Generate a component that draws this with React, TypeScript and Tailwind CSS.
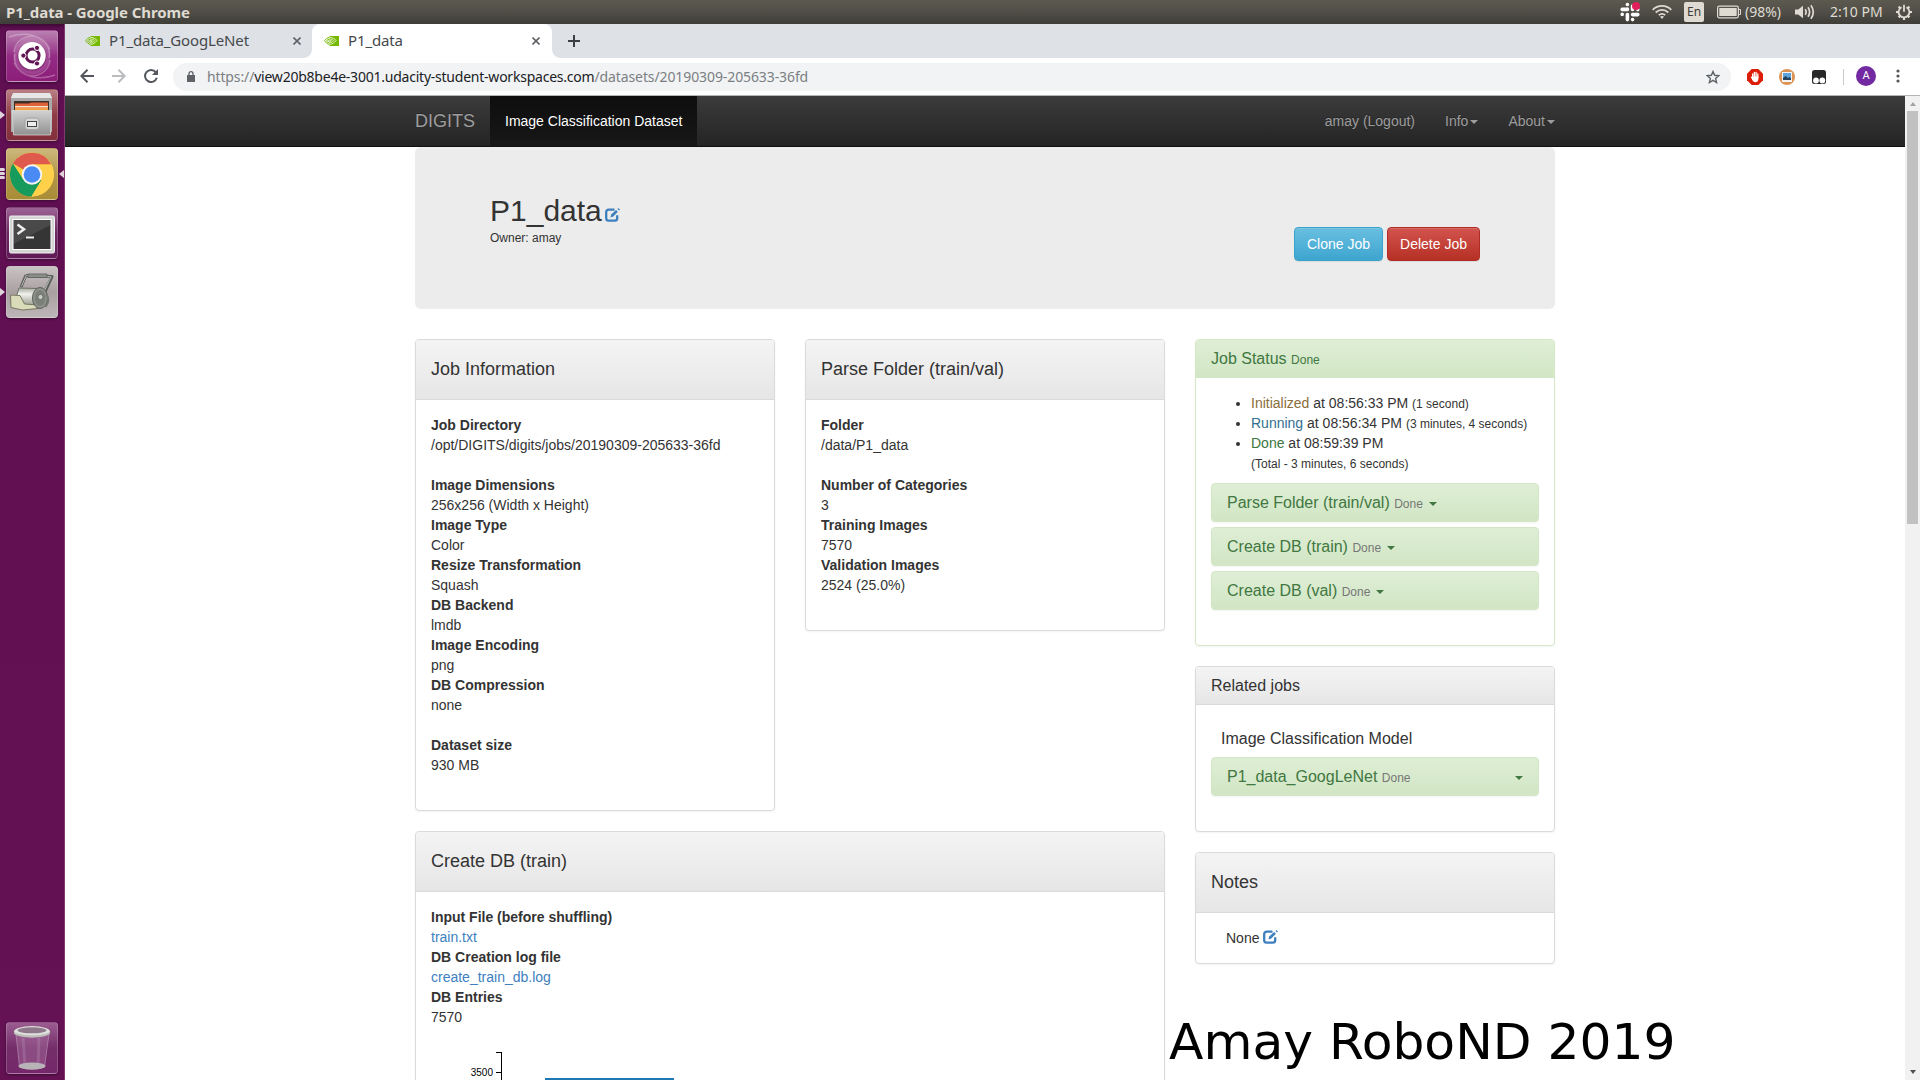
import React from 'react';

const UI = "font-['Noto_Sans',sans-serif]";

/* ---------- small shared pieces ---------- */

function Caret({ className = '' }: { className?: string }) {
  return (
    <span
      className={`inline-block h-0 w-0 border-x-4 border-t-4 border-x-transparent border-t-current align-middle ${className}`}
    />
  );
}

function EditIcon({ className = '' }: { className?: string }) {
  return (
    <svg viewBox="0 0 15 14" className={`inline-block h-[14px] w-[15px] ${className}`} fill="none">
      <path
        d="M9.500 1.700H3.600A2.400 2.400 0 0 0 1.200 4.100v6.200a2.400 2.400 0 0 0 2.400 2.400h6.200a2.400 2.400 0 0 0 2.400-2.400V7.200"
        stroke="#3d80bf"
        strokeWidth="2.300"
      />
      <path d="M5.400 9.600 6.200 6.600 11 1.900 12.900 3.800 8.300 8.500z" fill="#3d80bf" />
      <path d="M12.400.9 13.300 0 15 1.700 14.100 2.600z" fill="#3d80bf" />
    </svg>
  );
}

function NvidiaIcon() {
  return (
    <svg viewBox="0 0 15 10" className="h-[10px] w-[15px] shrink-0" fill="none">
      <path d="M5.500 0H15v10H5.500z" fill="#76b900" />
      <g stroke="#76b900" strokeWidth="1">
        <path d="M5.500 1.400C3.500 1.600 1.700 2.900.6 4.500 1.600 6.500 3.400 8.100 5.500 8.400" />
        <path d="M5.500 3.100C4.400 3.300 3.300 3.900 2.600 4.700 3.200 5.800 4.300 6.600 5.500 6.800" />
        <path d="M5.500 4.300 4.700 4.800l.8.7" />
      </g>
      <g stroke="#edf7da" strokeWidth=".9">
        <path d="M5.500 1.500c2.700-.3 4.900.900 6.500 3C10.500 6.600 8.300 8.300 5.500 8.300" />
        <path d="M5.500 3.100c1.700-.2 3.100.400 4.100 1.500C8.500 5.900 7.200 6.700 5.500 6.700" />
        <path d="M5.500 4.500c.8-.1 1.300 0 1.800.3-.5.500-1.100.7-1.800.7" />
      </g>
    </svg>
  );
}

/* ---------- desktop top bar ---------- */

function TopBar() {
  return (
    <header
      className={`flex h-6 shrink-0 items-center bg-linear-to-b from-[#5c5a4f] via-[#504e47] to-[#3e3d38] pl-[6px] text-[#dfdbd2] ${UI}`}
    >
      <span className="text-[15px] leading-6 font-bold tracking-[-0.08px]">P1_data - Google Chrome</span>
      <div className="ml-auto flex h-6 items-center">
        <svg viewBox="0 0 20 20" className="mr-3 h-5 w-5">
          <g stroke="#fff" strokeWidth="3.600" strokeLinecap="round">
            <path d="M7.400 2.500v0M7.400 7v0M2.200 7.400h5.200M12.600 4v3.400M17.800 7.600h0M12.600 12.600h5.200M12.600 17.600v0M7.400 12.600v5M2.200 12.400h0" />
          </g>
          <circle cx="16" cy="4" r="4" fill="#e01e5a" />
        </svg>
        <svg viewBox="0 0 20 14" className="mr-3 h-[14px] w-5" fill="none" stroke="#dfdbd2" strokeWidth="1.700">
          <path d="M.7 4.800C6-.4 14-.4 19.300 4.800M3.700 7.500c3.700-3.400 8.900-3.400 12.600 0M6.700 10.200c2-1.700 4.600-1.700 6.600 0" />
          <path d="M8 11.600 10 14l2-2.400c-1.200-.9-2.800-.9-4 0z" fill="#dfdbd2" stroke="none" />
        </svg>
        <span className="mr-[13px] flex h-5 w-5 items-center justify-center rounded-[2px] bg-[#dfdbd2] text-[12px] text-[#3c3b37]">
          En
        </span>
        <svg viewBox="0 0 24 14" className="mr-1 h-[14px] w-6">
          <rect x=".6" y="1.100" width="20.800" height="11.800" rx="1.800" fill="none" stroke="#dfdbd2" strokeWidth="1.200" />
          <rect x="2.300" y="3" width="17.400" height="8" fill="#dfdbd2" />
          <path d="M22 4.500h1.500v5H22" fill="none" stroke="#dfdbd2" />
        </svg>
        <span className="mr-3 w-[38px] text-sm whitespace-nowrap">(98%)</span>
        <svg viewBox="0 0 20 16" className="mr-[15px] h-4 w-5">
          <path d="M0 5.500h3.200L8 1.800v12.400l-4.800-3.700H0z" fill="#dfdbd2" />
          <path d="M10.200 5.200q1.800 2.800 0 5.600M13 3.300q3.200 4.700 0 9.400M15.900 1.200q4.800 6.800 0 13.600" fill="none" stroke="#dfdbd2" strokeWidth="1.700" />
        </svg>
        <span className="mr-[13px] w-[53px] text-sm whitespace-nowrap">2:10 PM</span>
        <svg viewBox="0 0 16 16" className="mr-2 h-4 w-4" fill="none" stroke="#dfdbd2">
          <path d="M5.600 3.200a5.400 5.400 0 1 0 4.800 0M8 .8v7" strokeWidth="1.800" />
          <path d="M2.600 2.600l1.700 1.700M13.400 2.600l-1.700 1.700M0 8h2.400M16 8h-2.400M2.600 13.400l1.700-1.700M13.400 13.400l-1.700-1.700M8 13.600V16" strokeWidth="2.200" />
        </svg>
      </div>
    </header>
  );
}

/* ---------- launcher ---------- */

function Tile({ className, children }: { className: string; children: React.ReactNode }) {
  return (
    <div
      className={`relative ml-[6px] flex h-[52px] w-[52px] shrink-0 items-center justify-center rounded-[4px] border border-white/20 shadow-[0_1px_3px_rgba(0,0,0,0.4)] ${className}`}
    >
      {children}
    </div>
  );
}

function Pip() {
  return <span className="absolute top-[21px] -left-[7px] h-0 w-0 border-y-4 border-l-[5px] border-y-transparent border-l-[#ded5dc]" />;
}

function Launcher() {
  return (
    <aside className="flex w-[65px] shrink-0 flex-col gap-[7px] border-r border-[#7d3a73] bg-[linear-gradient(to_bottom,#3f0a37_0,#600f52_5px,#641254_100%)] pt-[6px] pb-[6px]">
      <Tile className="bg-linear-to-b from-[#b981b1] via-[#942b85] to-[#8c1d79]">
        <svg viewBox="0 0 50 50" className="h-[50px] w-[50px]">
          <g fill="none" stroke="#fff" strokeOpacity=".28">
            <path d="M7 21C8 9 20 3 30 6c9 3 14 12 12 21M43 29C42 41 30 47 20 44 11 41 6 32 8 23M2 6c16-6 34-2 41 12M48 44c-16 6-34 2-41-12" strokeWidth="1.500" />
            <circle cx="25" cy="25" r="16" strokeWidth="5" strokeOpacity=".14" />
          </g>
          <circle cx="25" cy="25.500" r="14.500" fill="#5c1550" fillOpacity=".4" />
          <circle cx="25" cy="24.800" r="13.700" fill="#fff" />
          <circle cx="25.600" cy="24.600" r="6.500" fill="none" stroke="#611554" strokeWidth="3" />
          <g fill="#611554" stroke="#fff">
            <circle cx="16.400" cy="24.600" r="2.600" />
            <circle cx="30" cy="16.900" r="2.600" />
            <circle cx="30" cy="32.500" r="2.600" />
          </g>
        </svg>
      </Tile>
      <Tile className="bg-linear-to-b from-[#b98086] via-[#8f3c46] to-[#84303c]">
        <Pip />
        <svg viewBox="0 0 50 50" className="h-[50px] w-[50px]">
          <defs>
            <linearGradient id="cab" x2="0" y2="1">
              <stop stopColor="#d2d2d2" />
              <stop offset="1" stopColor="#909090" />
            </linearGradient>
          </defs>
          <path d="M6 3h37l2 5v34H4V8z" fill="#a9a9a9" />
          <path d="M6 3h37l2 5H4z" fill="#e6e6e6" />
          <path d="M7 11h35v10H7z" fill="#3e2f28" />
          <path d="M8 13.500h14l2-1h17v8H8z" fill="#dd6338" />
          <path d="M8 16h33v1.500H8z" fill="#f9e4cf" />
          <path d="M8 17.500h33V21H8z" fill="#f1a04c" />
          <path d="M5 20.500h39.500L43.500 45h-37z" fill="url(#cab)" stroke="#e0e0e0" strokeWidth=".7" />
          <rect x="18" y="28" width="14" height="11.500" rx="3" fill="#d6d6d6" stroke="#a3a3a3" />
          <rect x="20.500" y="31.500" width="9" height="5" fill="#eee" stroke="#444" />
        </svg>
      </Tile>
      <Tile className="bg-linear-to-b from-[#cdb87c] via-[#b3964a] to-[#a98c35]">
        <span className="absolute top-[19px] -left-[7px] flex flex-col gap-px">
          <i className="h-[3px] w-[5px] rounded-r-full bg-[#ded5dc]" />
          <i className="h-[3px] w-[5px] rounded-r-full bg-[#ded5dc]" />
          <i className="h-[3px] w-[5px] rounded-r-full bg-[#ded5dc]" />
        </span>
        <svg viewBox="0 0 50 50" className="h-[50px] w-[50px]">
          <circle cx="25" cy="25.500" r="22" fill="#ffcd40" />
          <path d="M25 25.500 5.900 14.500A22 22 0 0 1 44.300 15.500H25z" fill="#e0594d" />
          <path d="M5.900 14.500A22 22 0 0 0 24.500 47.500l10-16.500-18.200-.5z" fill="#169b5c" />
          <path d="M44.300 15.500H25l9.500 15.500-10 16.500A22 22 0 0 0 44.300 15.500z" fill="#ffd04a" />
          <circle cx="25" cy="25.500" r="10.200" fill="#f6f4ef" />
          <circle cx="25" cy="25.500" r="8.300" fill="#4a8af4" />
        </svg>
        <span className="absolute top-[21px] -right-[7px] h-0 w-0 border-y-4 border-r-[5px] border-y-transparent border-r-[#ded5dc]" />
      </Tile>
      <Tile className="bg-linear-to-b from-[#9d6396] via-[#6c2863] to-[#5f1a55]">
        <svg viewBox="0 0 50 50" className="h-[50px] w-[50px]">
          <rect x="2.500" y="8" width="45" height="37" rx="1.500" fill="#d4d4d4" stroke="#f0f0f0" />
          <rect x="5.500" y="11" width="39" height="31" fill="#fff" />
          <rect x="6.500" y="12" width="37" height="29" fill="#353535" />
          <path d="M6.500 12h37v5l-37 19z" fill="#fff" fillOpacity=".1" />
          <path d="m10.500 16.500 6.500 4.700-6.500 4.700" fill="none" stroke="#eee" strokeWidth="2.500" />
          <path d="M19 29.500h8" stroke="#eee" strokeWidth="2" />
        </svg>
      </Tile>
      <Tile className="bg-linear-to-b from-[#c9c2c3] via-[#a9a0a2] to-[#bdb5b8]">
        <Pip />
        <svg viewBox="0 0 50 50" className="h-[50px] w-[50px]">
          <defs>
            <linearGradient id="drum" x2="0" y2="1">
              <stop stopColor="#a4a89c" />
              <stop offset=".3" stopColor="#f1f2ec" />
              <stop offset="1" stopColor="#85897d" />
            </linearGradient>
          </defs>
          <path d="M14 20 19 8M19 8.500 45 9.500 36 29" fill="none" stroke="#5b5e59" strokeWidth="3" strokeLinejoin="round" />
          <path d="M14.500 19 19.200 8.500 44 9.800 35.500 28" fill="none" stroke="#b7bab4" strokeWidth="1" />
          <path d="M21 7h19v3.500H21z" fill="#8c8f89" stroke="#5b5e59" strokeWidth=".8" />
          <path d="M12 21 31 21.500 33 41 16 40 8 34z" fill="url(#drum)" stroke="#6c7066" />
          <path d="M3.500 28 13 28.500 17.500 37 31 38v3.500L15.500 43 4 40.500z" fill="#d9dbb9" stroke="#6c6f58" strokeWidth=".9" />
          <ellipse cx="33" cy="31" rx="7.500" ry="10.500" fill="#90948d" stroke="#5b5e59" strokeWidth="1" />
          <ellipse cx="33" cy="31" rx="5.300" ry="8" fill="#7c807a" />
          <path d="M39.500 27c2.500 4 2 9-1 13" fill="none" stroke="#777a74" strokeWidth="2" />
          <circle cx="33.500" cy="30" r="2.600" fill="#c9ccc6" stroke="#5f625d" strokeWidth=".8" />
        </svg>
      </Tile>
      <div className="mt-auto">
        <Tile className="bg-linear-to-b from-[#9a5c91] via-[#742d69] to-[#74286b]">
          <svg viewBox="0 0 50 50" className="h-[50px] w-[50px]">
            <path d="M9 11 12.500 44q12 5 25 0L42 11z" fill="#b07ba8" fillOpacity=".4" stroke="#c9a8c4" strokeOpacity=".5" />
            <path d="M16 15 18 43M32 15l-1 28" stroke="#fff" strokeOpacity=".12" strokeWidth="3" />
            <ellipse cx="25" cy="43" rx="13.500" ry="3.600" fill="#b7b3b6" />
            <ellipse cx="25" cy="8.500" rx="18" ry="5.400" fill="#e0e0de" />
            <ellipse cx="25" cy="7.300" rx="14.500" ry="3" fill="#8e7889" />
            <path d="M7 8.500c4 5 32 5 36 0v2c-4 5.500-32 5.500-36 0z" fill="#bdbdba" />
          </svg>
        </Tile>
      </div>
    </aside>
  );
}

/* ---------- browser chrome ---------- */

function CloseX() {
  return (
    <svg viewBox="0 0 8 8" className="ml-auto h-2 w-2" stroke="#5f6368" strokeWidth="1.600">
      <path d="M.5.5l7 7M7.500.5l-7 7" />
    </svg>
  );
}

function TabStrip() {
  return (
    <div className={`flex h-[34px] shrink-0 bg-[#dee1e6] text-[15px] tracking-[-0.14px] text-[#45494d] ${UI}`}>
      <div className="flex w-[247px] items-center pr-[11px] pl-5">
        <NvidiaIcon />
        <span className="ml-[9px] pb-[2px]">P1_data_GoogLeNet</span>
        <CloseX />
      </div>
      <div className="relative flex w-[240px] items-center rounded-t-[8px] bg-white pr-[12px] pl-3">
        <span className="absolute bottom-0 -left-2 h-2 w-2 bg-[radial-gradient(circle_at_0_0,transparent_7.500px,white_8px)]" />
        <span className="absolute -right-2 bottom-0 h-2 w-2 bg-[radial-gradient(circle_at_100%_0,transparent_7.500px,white_8px)]" />
        <NvidiaIcon />
        <span className="ml-[9px] pb-[2px]">P1_data</span>
        <CloseX />
      </div>
      <svg viewBox="0 0 12 12" className="mt-[11px] ml-4 h-3 w-3" stroke="#3c4043" strokeWidth="2">
        <path d="M6 0v12M0 6h12" />
      </svg>
    </div>
  );
}

function Toolbar() {
  return (
    <div className={`flex h-[38px] shrink-0 items-center border-b border-[#b3b6b5] bg-white text-sm ${UI}`}>
      <svg viewBox="0 0 14 14" className="mb-[2px] ml-[15px] h-[14px] w-[14px]" fill="none" stroke="#54585d" strokeWidth="2">
        <path d="M14 7H1.500M7.500.8 1.300 7l6.200 6.200" />
      </svg>
      <svg viewBox="0 0 14 14" className="mb-[2px] ml-[18px] h-[14px] w-[14px]" fill="none" stroke="#babcbe" strokeWidth="2">
        <path d="M0 7h12.500M6.500.8 12.700 7l-6.200 6.200" />
      </svg>
      <svg viewBox="0 0 14 14" className="mb-[2px] ml-[18px] h-[14px] w-[14px]" fill="none">
        <path d="M11.800 3.300A6 6 0 1 0 12.800 8.800" stroke="#54585d" strokeWidth="2" />
        <path d="M14 0v6H8z" fill="#54585d" />
      </svg>
      <div className="ml-[15px] flex h-7 w-[1558px] items-center rounded-full bg-[#f1f3f4] pr-[11px] pl-[14px]">
        <svg viewBox="0 0 8 11" className="mr-[12px] h-[11px] w-2" fill="#5f6368">
          <path d="M0 4h8v7H0z" />
          <path d="M2 4.500V2.700a2 2 0 0 1 4 0v1.800" fill="none" stroke="#5f6368" strokeWidth="1.300" />
        </svg>
        <span className="tracking-[-0.13px] text-[#7b7f83]">https://</span>
        <span className="tracking-[-0.23px] text-[#202124]">view20b8be4e-3001.udacity-student-workspaces.com</span>
        <span className="tracking-[-0.1px] text-[#7b7f83]">/datasets/20190309-205633-36fd</span>
        <svg viewBox="0 0 14 14" className="ml-auto h-[14px] w-[14px]" fill="none" stroke="#5f6368" strokeWidth="1.400">
          <path d="m7 1.500 1.600 3.800 4.200.4-3.200 2.700 1 4.100L7 10.300l-3.600 2.200 1-4.100L1.200 5.700l4.200-.4z" />
        </svg>
      </div>
      <svg viewBox="0 0 16 16" className="ml-4 h-4 w-4">
        <path d="M4.700 0h6.600L16 4.700v6.600L11.300 16H4.700L0 11.300V4.700z" fill="#dc1e08" />
        <path
          d="M5.700 8.500V5M7.400 8V3.300M9.100 8V3.300M10.800 9V5M4.500 8.300 6.500 11"
          fill="none"
          stroke="#fff"
          strokeWidth="1.300"
          strokeLinecap="round"
        />
        <path d="M5.100 7.600h6.300V10c-.2 2.200-1.400 3.300-3 3.300S5.800 12 5 10.300z" fill="#fff" />
      </svg>
      <svg viewBox="0 0 16 16" className="ml-4 h-4 w-4">
        <circle cx="8" cy="8" r="8" fill="#dc9353" />
        <rect x="3" y="3" width="10" height="10" fill="#f4f4f4" />
        <rect x="4" y="4" width="8" height="7" fill="#5fa3d9" />
        <path d="M4 11V9l2.500-2L9 9l1.500-1L12 9.500V11z" fill="#23425e" />
      </svg>
      <svg viewBox="0 0 14 14" className="ml-[17px] h-[14px] w-[14px]">
        <rect width="14" height="14" rx="2.500" fill="#282828" />
        <circle cx="4" cy="10.500" r="2.900" fill="#fff" />
        <circle cx="10.300" cy="10.500" r="2.900" fill="#fff" />
      </svg>
      <span className="ml-[17px] h-4 w-px bg-[#c8cacc]" />
      <span className="mb-[2px] ml-3 flex h-5 w-5 items-center justify-center rounded-full bg-[#7229a1] font-['Roboto',sans-serif] text-[11px] text-white">
        A
      </span>
      <svg viewBox="0 0 4 14" className="mb-px ml-5 h-[14px] w-1" fill="#54585d">
        <circle cx="2" cy="2" r="1.600" />
        <circle cx="2" cy="7" r="1.600" />
        <circle cx="2" cy="12" r="1.600" />
      </svg>
    </div>
  );
}

function Scrollbar() {
  return (
    <div className="flex w-[15px] shrink-0 flex-col items-center bg-[#f1f1f1] py-[6px]">
      <span className="h-0 w-0 border-x-[3.500px] border-b-4 border-x-transparent border-b-[#a3a3a3]" />
      <span className="mt-[5px] h-[413px] w-[11px] bg-[#c1c1c1]" />
      <span className="mt-auto h-0 w-0 border-x-[3.500px] border-t-4 border-x-transparent border-t-[#505050]" />
    </div>
  );
}

/* ---------- DIGITS page ---------- */

function Navbar() {
  return (
    <nav className="flex h-[51px] justify-center border-b border-[#101010] bg-linear-to-b from-[#3c3c3c] to-[#242424]">
      <div className="flex w-[1140px] leading-5 text-[#9d9d9d] [text-shadow:0_-1px_0_rgba(0,0,0,0.25)]">
        <span className="w-[75px] pt-[15px] text-lg leading-5">DIGITS</span>
        <span className="w-[207px] bg-linear-to-b from-[#0e0e0e] to-[#171717] pt-[15px] pl-[15px] text-white">
          Image Classification Dataset
        </span>
        <div className="ml-auto flex gap-[30px] pt-[15px]">
          <span>amay (Logout)</span>
          <span className="whitespace-nowrap">
            Info
            <Caret className="ml-[2px]" />
          </span>
          <span className="whitespace-nowrap">
            About
            <Caret className="ml-[2px]" />
          </span>
        </div>
      </div>
    </nav>
  );
}

function Jumbotron() {
  return (
    <div className="flex h-[162px] justify-between rounded-[6px] bg-[#ececec] px-[75px]">
      <div className="pt-[47px]">
        <h2 className="flex text-[30px] leading-[33px]">
          P1_data
          <EditIcon className="mt-[14px] ml-[3px]" />
        </h2>
        <div className="mt-px text-[12px] leading-5">Owner: amay</div>
      </div>
      <div className="flex gap-1 pt-20 text-white [text-shadow:0_-1px_0_rgba(0,0,0,0.2)]">
        <button className="h-[34px] w-[89px] rounded-[4px] border border-[#38a3cb] bg-linear-to-b from-[#68bfe0] to-[#3da5cf] shadow-[inset_0_1px_0_rgba(255,255,255,0.15),0_1px_1px_rgba(0,0,0,0.075)]">
          Clone Job
        </button>
        <button className="h-[34px] w-[93px] rounded-[4px] border border-[#b02c25] bg-linear-to-b from-[#d2544e] to-[#b62f24] shadow-[inset_0_1px_0_rgba(255,255,255,0.15),0_1px_1px_rgba(0,0,0,0.075)]">
          Delete Job
        </button>
      </div>
    </div>
  );
}

function Panel({ title, className = '', children }: { title: string; className?: string; children: React.ReactNode }) {
  return (
    <section className={`rounded-[4px] border border-[#dadada] bg-white shadow-[0_1px_2px_rgba(0,0,0,0.05)] ${className}`}>
      <h4 className="h-[60px] rounded-t-[3px] border-b border-[#dadada] bg-linear-to-b from-[#f4f4f4] to-[#e6e6e6] px-[15px] pt-5 text-lg leading-[19px]">
        {title}
      </h4>
      <div className="p-[15px]">{children}</div>
    </section>
  );
}

function Term({ name, children }: { name: string; children: React.ReactNode }) {
  return (
    <>
      <dt className="font-bold">{name}</dt>
      <dd>{children}</dd>
    </>
  );
}

function StatusBar({ name, spread = false }: { name: string; spread?: boolean }) {
  return (
    <div className="mb-[5px] flex h-[39px] items-center rounded-[4px] border border-[#d3e7c6] bg-linear-to-b from-[#dfeed6] to-[#d1e6c4] px-[15px] text-base leading-[19px] text-[#417741] shadow-[0_1px_2px_rgba(0,0,0,0.05)]">
      <span className="whitespace-pre">
        {name} <small className="text-[12px] leading-none text-[#777]">Done</small>
      </span>
      <Caret className={spread ? 'mt-[2px] ml-auto' : 'mt-[2px] ml-[6px]'} />
    </div>
  );
}

function Small({ children }: { children: React.ReactNode }) {
  return <small className="text-[12px] leading-none">{children}</small>;
}

function JobStatus() {
  return (
    <section className="h-[307px] rounded-[4px] border border-[#d6e9c6] bg-white shadow-[0_1px_2px_rgba(0,0,0,0.05)]">
      <h4 className="h-[38px] rounded-t-[3px] bg-linear-to-b from-[#dfeed6] to-[#d1e6c4] px-[15px] pt-[10px] text-base leading-[17px] text-[#417741]">
        Job Status <Small>Done</Small>
      </h4>
      <div className="p-[15px]">
        <ul className="mb-[10px] list-disc pl-10 leading-5">
          <li>
            <span className="text-[#8a6d3b]">Initialized</span> at 08:56:33 PM <Small>(1 second)</Small>
          </li>
          <li>
            <span className="text-[#31708f]">Running</span> at 08:56:34 PM <Small>(3 minutes, 4 seconds)</Small>
          </li>
          <li>
            <span className="text-[#3c763d]">Done</span> at 08:59:39 PM
            <br />
            <Small>(Total - 3 minutes, 6 seconds)</Small>
          </li>
        </ul>
        <StatusBar name="Parse Folder (train/val)" />
        <StatusBar name="Create DB (train)" />
        <StatusBar name="Create DB (val)" />
      </div>
    </section>
  );
}

function RelatedJobs() {
  return (
    <section className="mt-5 h-[166px] rounded-[4px] border border-[#dadada] bg-white shadow-[0_1px_2px_rgba(0,0,0,0.05)]">
      <h4 className="h-[38px] rounded-t-[3px] border-b border-[#dadada] bg-linear-to-b from-[#f4f4f4] to-[#e6e6e6] px-[15px] pt-[10px] text-base leading-[17px]">
        Related jobs
      </h4>
      <div className="px-[15px] pt-[25px]">
        <div className="mb-[9px] pl-[10px] text-base leading-[18px]">Image Classification Model</div>
        <StatusBar name="P1_data_GoogLeNet" spread />
      </div>
    </section>
  );
}

function EntriesChart() {
  return (
    <svg className="ml-[15px] block h-[240px] w-[600px] overflow-hidden" viewBox="0 0 600 240">
      <path d="M49.500 10.500h6v230M49.500 30.500h6" fill="none" stroke="#000" shapeRendering="crispEdges" />
      <text x="47" y="34" textAnchor="end" fontSize="10" fill="#000">
        3500
      </text>
      <rect x="99" y="36" width="129" height="204" fill="#1f77b4" />
    </svg>
  );
}

export default function App() {
  return (
    <div className="relative flex h-[1080px] w-[1920px] flex-col overflow-hidden bg-white">
      <TopBar />
      <div className="flex min-h-0 flex-1">
        <Launcher />
        <div className="flex min-w-0 flex-1 flex-col">
          <TabStrip />
          <Toolbar />
          <div className="flex min-h-0 flex-1">
            <div className="min-w-0 flex-1 overflow-hidden font-['Liberation_Sans',sans-serif] text-sm leading-5 text-[#333]">
              <Navbar />
              <main className="mx-auto w-[1140px]">
                <Jumbotron />
                <div className="mt-[30px] flex gap-[30px]">
                  <div className="w-[750px]">
                    <div className="flex items-start justify-between">
                      <Panel title="Job Information" className="h-[472px] w-[360px]">
                        <dl>
                          <Term name="Job Directory">/opt/DIGITS/digits/jobs/20190309-205633-36fd</Term>
                        </dl>
                        <dl className="mt-5">
                          <Term name="Image Dimensions">256x256 (Width x Height)</Term>
                          <Term name="Image Type">Color</Term>
                          <Term name="Resize Transformation">Squash</Term>
                          <Term name="DB Backend">lmdb</Term>
                          <Term name="Image Encoding">png</Term>
                          <Term name="DB Compression">none</Term>
                        </dl>
                        <dl className="mt-5">
                          <Term name="Dataset size">930 MB</Term>
                        </dl>
                      </Panel>
                      <Panel title="Parse Folder (train/val)" className="h-[292px] w-[360px]">
                        <dl>
                          <Term name="Folder">/data/P1_data</Term>
                        </dl>
                        <dl className="mt-5">
                          <Term name="Number of Categories">3</Term>
                          <Term name="Training Images">7570</Term>
                          <Term name="Validation Images">2524 (25.0%)</Term>
                        </dl>
                      </Panel>
                    </div>
                    <Panel title="Create DB (train)" className="mt-5">
                      <dl className="mb-[15px]">
                        <Term name="Input File (before shuffling)">
                          <a className="text-[#3d80bf]">train.txt</a>
                        </Term>
                        <Term name="DB Creation log file">
                          <a className="text-[#3d80bf]">create_train_db.log</a>
                        </Term>
                        <Term name="DB Entries">7570</Term>
                      </dl>
                      <EntriesChart />
                    </Panel>
                  </div>
                  <div className="w-[360px]">
                    <JobStatus />
                    <RelatedJobs />
                    <Panel title="Notes" className="mt-5 h-[112px]">
                      <div className="flex pl-[15px]">
                        None
                        <EditIcon className="mt-[2px] ml-1" />
                      </div>
                    </Panel>
                  </div>
                </div>
              </main>
            </div>
            <Scrollbar />
          </div>
        </div>
      </div>
      <div className="absolute top-[1013px] left-[1169px] font-['DejaVu_Sans',sans-serif] text-[50.3px] leading-[58px] whitespace-nowrap text-black">
        Amay RoboND 2019
      </div>
    </div>
  );
}
